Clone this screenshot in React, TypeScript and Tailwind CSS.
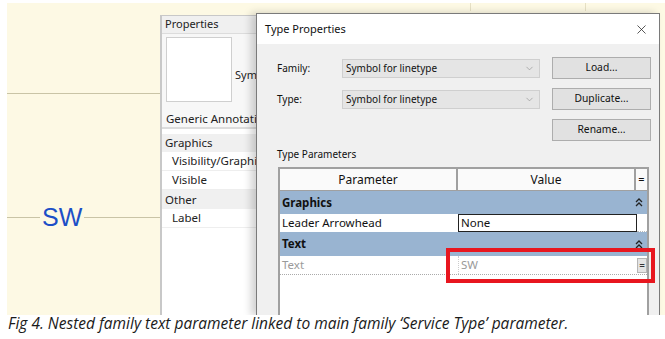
import { ChevronDown, X } from "lucide-react";

function UpChevrons() {
  return (
    <svg width="8" height="9" viewBox="0 0 8 9" fill="none" stroke="#222" strokeWidth="1.3">
      <path d="M1 4 L4 1 L7 4" />
      <path d="M1 8 L4 5 L7 8" />
    </svg>
  );
}

function Combo({ value }: { value: string }) {
  return (
    <div className="w-[198px] h-[19px] bg-[#e5e5e5] border border-[#cfcfcf] flex items-center justify-between pl-[3px] pr-[4px] text-[10px] text-[#111]">
      <span>{value}</span>
      <ChevronDown className="w-[11px] h-[11px] text-[#888]" strokeWidth={1.3} />
    </div>
  );
}

function Btn({ label }: { label: string }) {
  return (
    <div className="w-[99px] h-[22px] bg-[#e1e1e1] border border-[#adadad] flex items-center justify-center text-[10.3px] text-[#111]">
      {label}
    </div>
  );
}

function PropertiesPanel() {
  return (
    <div className="absolute left-[153px] top-[12px] w-[96px] h-[300px] bg-white border-l-2 border-t border-[#c8c8c8] text-[11px] text-[#222] whitespace-nowrap overflow-hidden">
      <div className="h-[18px] bg-[#f0f0f0] border-b border-[#dcdcdc] flex items-center pl-[3px]">Properties</div>
      <div className="h-[77px] bg-[#f7f7f7] flex pl-[4px] pt-[3px]">
        <div className="w-[66px] h-[65px] shrink-0 bg-white border border-[#cfcfcf]" />
        <div className="ml-[3px] mt-[30px]">Symbol for linetype</div>
      </div>
      <div className="h-[18px] bg-[#f7f7f7] border-b-2 border-[#dcdcdc] flex items-center pl-[4px] text-[11.5px]">Generic Annotations</div>
      <div className="h-[5px]" />
      <div className="h-[18px] bg-[#f0f0f0] flex items-center pl-[3px] text-[11.5px]">Graphics</div>
      <div className="h-[19px] border-b border-[#eeeeee] flex items-center pl-[10px] text-[11.5px]">Visibility/Graphics Overrides</div>
      <div className="h-[19px] border-b border-[#eeeeee] flex items-center pl-[10px] text-[11.5px]">Visible</div>
      <div className="h-[19px] bg-[#f0f0f0] flex items-center pl-[3px] text-[11.5px]">Other</div>
      <div className="h-[19px] border-b border-[#eeeeee] flex items-center pl-[10px] text-[11.5px]">Label</div>
    </div>
  );
}

function ParamTable() {
  return (
    <div className="w-[371px] h-[160px] bg-white border-2 border-[#a0a0a0] border-b-0 text-[11.5px] text-[#111]">
      <div className="flex h-[22px] bg-[#fafafa] border-b border-[#a0a0a0] text-[12px]">
        <div className="w-[178px] border-r-2 border-[#a0a0a0] flex items-center justify-center">Parameter</div>
        <div className="w-[178px] border-r-2 border-[#a0a0a0] flex items-center justify-center">Value</div>
        <div className="flex-1 flex items-center justify-center text-[11px]">=</div>
      </div>
      <div className="flex h-[23px] bg-[#99b4d1] items-center justify-between pl-[2px] pr-[4px]">
        <span className="font-bold">Graphics</span>
        <UpChevrons />
      </div>
      <div className="flex h-[18px]">
        <div className="w-[178px] flex items-center pl-[2px]">Leader Arrowhead</div>
        <div className="w-[179px] border border-[#222] flex items-center pl-[2px]">None</div>
        <div className="flex-1 border-b border-dotted border-[#bbb]" />
      </div>
      <div className="flex h-[24px] bg-[#99b4d1] items-center justify-between pl-[2px] pr-[4px]">
        <span className="font-bold">Text</span>
        <UpChevrons />
      </div>
      <div className="flex h-[19px] border-b border-dotted border-[#aaa] text-[#9a9a9a]">
        <div className="w-[178px] flex items-center pl-[2px]">Text</div>
        <div className="w-[179px] border-l border-dotted border-[#ccc] flex items-center pl-[2px]">SW</div>
        <div className="flex-1 flex items-center justify-center">
          <div className="w-[10px] h-[15px] bg-[#e3e3e3] border border-[#b5b5b5] flex items-center justify-center text-[10px] text-[#333]">=</div>
        </div>
      </div>
    </div>
  );
}

function TypeDialog() {
  return (
    <div className="absolute left-[249px] top-[10px] w-[404px] h-[303px] bg-[#f0f0f0] border border-[#7a7a7a] shadow-[-5px_0_8px_rgba(0,0,0,0.18)] text-[#111]">
      <div className="h-[30px] bg-white flex items-center justify-between pl-[8px] pr-[10px]">
        <span className="text-[11px]">Type Properties</span>
        <X className="w-[15px] h-[15px] text-[#222]" strokeWidth={1.2} />
      </div>
      <div className="pl-[20px] pt-[13px] flex flex-col">
        <div className="flex flex-col gap-[9px]">
          <div className="flex items-center h-[22px]">
            <div className="w-[65px] text-[10px]">Family:</div>
            <Combo value="Symbol for linetype" />
            <div className="ml-[12px]"><Btn label="Load..." /></div>
          </div>
          <div className="flex items-center h-[22px]">
            <div className="w-[65px] text-[10px]">Type:</div>
            <Combo value="Symbol for linetype" />
            <div className="ml-[12px]"><Btn label="Duplicate..." /></div>
          </div>
          <div className="flex items-center h-[22px]">
            <div className="ml-[275px]"><Btn label="Rename..." /></div>
          </div>
        </div>
        <div className="mt-[6px] h-[14px] text-[10px] leading-[14px]">Type Parameters</div>
        <div className="mt-[6px] ml-[1px]">
          <ParamTable />
        </div>
      </div>
    </div>
  );
}

export default function App() {
  return (
    <div className="relative w-[665px] h-[339px] bg-white overflow-hidden" style={{ fontFamily: '"Noto Sans", sans-serif' }}>
      <div className="absolute left-[7px] top-[3px] w-[658px] h-[312px] bg-[#fdf9e4] overflow-hidden">
        {/* canvas */}
        <div className="absolute left-0 top-[90px] w-[160px] h-px bg-[#c9c4a6]" />
        <div className="absolute left-0 top-[214px] w-[160px] h-px bg-[#c9c4a6]" />
        <div className="absolute left-[33px] top-[200px] px-[2px] bg-[#fdf9e4] text-[25px] leading-[28px] text-[#1c4fc7]" style={{ fontFamily: '"Liberation Sans", Arial, sans-serif' }}>
          SW
        </div>
        <div className="absolute left-[463px] top-0 w-px h-[8px] bg-[#e6e0c4]" />
        <div className="absolute left-[578px] top-0 w-px h-[8px] bg-[#e6e0c4]" />
        <PropertiesPanel />
        <TypeDialog />
        {/* highlight */}
        <div className="absolute left-[439px] top-[245px] w-[209px] h-[35px] border-4 border-[#e8161f]" />
      </div>
      <div className="absolute left-[8px] top-[314px] text-[15.5px] leading-[18px] italic text-[#1a1a1a] whitespace-nowrap" style={{ fontFamily: '"Open Sans", sans-serif' }}>
        Fig 4. Nested family text parameter linked to main family ‘Service Type’ parameter.
      </div>
    </div>
  );
}
